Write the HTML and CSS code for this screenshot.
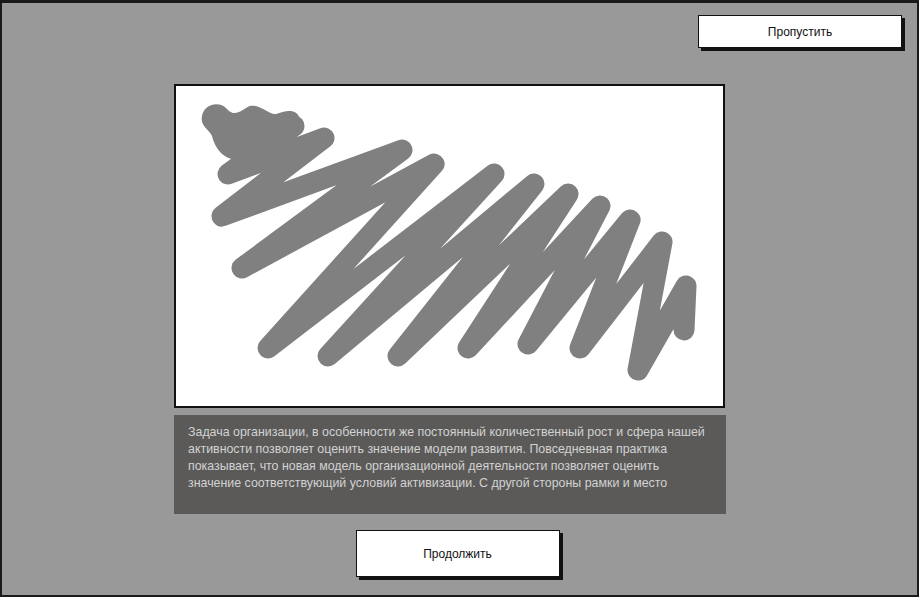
FILE: index.html
```html
<!DOCTYPE html>
<html lang="ru">
<head>
    <meta charset="UTF-8">
    <meta name="viewport" content="width=device-width, initial-scale=1.0">
    <title>Онбординг</title>
    <link rel="stylesheet" href="styles.css">
</head>
<body>
    <div class="frame">
        <div class="top-bar">
            <button class="sketch-btn skip-btn">Пропустить</button>
        </div>

        <div class="content">
            <div class="picture">
                <svg width="547" height="320" viewBox="0 0 547 320">
                    <path class="blob" d="M26,30 C28,18 44,14 52,24 C58,30 64,26 70,22 C80,14 94,30 100,28 C110,24 122,22 124,34 L70,72 C52,78 40,66 36,50 C32,42 24,40 26,30 Z" />
                    <path class="scribble" d="M40,34 L58,52 L90,38 L118,40 L52,88 L148,52 L46,130 L226,64 L66,182 L258,78 L92,262 L318,88 L152,270 L358,98 L222,270 L392,108 L292,262 L424,120 L352,258 L454,134 L404,262 L486,156 L462,284 L510,200 L508,244" />
                </svg>
            </div>
            <div class="description">
                <p>Задача организации, в особенности же постоянный количественный рост и сфера нашей<br>
                активности позволяет оценить значение модели развития. Повседневная практика<br>
                показывает, что новая модель организационной деятельности позволяет оценить<br>
                значение соответствующий условий активизации. С другой стороны рамки и место</p>
            </div>
        </div>

        <div class="actions">
            <button class="sketch-btn next-btn">Продолжить</button>
        </div>
    </div>
</body>
</html>
```

FILE: styles.css
```css
body {
    margin: 0;
    padding: 0;
    font-family: "Liberation Sans", Arial, sans-serif;
    background: #999999;
}
.frame {
    box-sizing: border-box;
    width: 919px;
    height: 597px;
    border: 2px solid #1a1a1a;
    border-top-width: 3px;
    background: #999999;
    display: flex;
    flex-direction: column;
}
.top-bar {
    display: flex;
    justify-content: flex-end;
    padding: 12px 15px 0;
}
.sketch-btn {
    box-sizing: border-box;
    width: 204px;
    background: #fff;
    border: 1.5px solid #111;
    box-shadow: 3px 3px 0 #111;
    font-family: "Liberation Sans", Arial, sans-serif;
    font-size: 12px;
    color: #111;
    cursor: pointer;
}
.skip-btn {
    height: 33px;
}
.next-btn {
    height: 47px;
}
.content {
    margin: 36px 0 0 172px;
    width: 552px;
}
.picture {
    box-sizing: border-box;
    width: 551px;
    height: 324px;
    border: 2px solid #111;
    background: #fff;
}
.picture svg {
    display: block;
}
.blob {
    fill: #808080;
}
.scribble {
    fill: none;
    stroke: #808080;
    stroke-width: 21;
    stroke-linecap: round;
    stroke-linejoin: round;
}
.description {
    box-sizing: border-box;
    margin-top: 7px;
    height: 99px;
    padding: 9px 14px;
    background: #5b5a59;
}
.description p {
    margin: 0;
    color: #d2d2d2;
    font-size: 12.4px;
    line-height: 17px;
    white-space: nowrap;
}
.actions {
    display: flex;
    justify-content: center;
    padding-right: 4px;
    margin-top: 16px;
}
```
